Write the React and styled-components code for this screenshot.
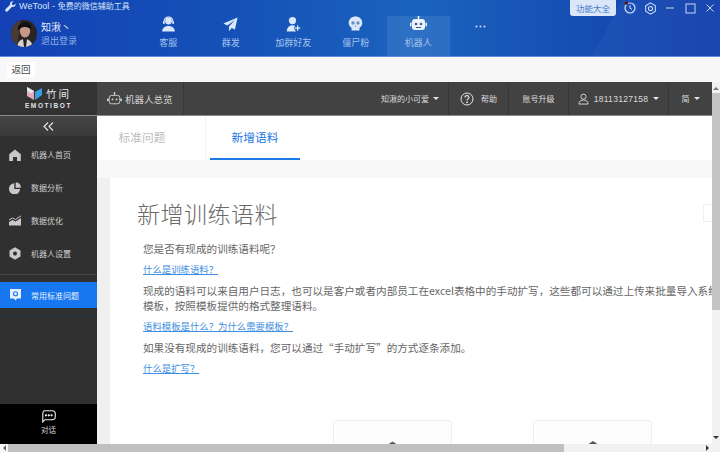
import React from 'react';
import styled, { createGlobalStyle } from 'styled-components';

const Global = createGlobalStyle`
  html, body { margin: 0; padding: 0; width: 720px; height: 452px; overflow: hidden; background: #fff; }
  * { box-sizing: border-box; }
  body { font-family: "Noto Sans CJK SC", "Liberation Sans", sans-serif; }
`;

const Window = styled.div`
  width: 720px; height: 452px; display: flex; flex-direction: column; overflow: hidden;
`;

/* ---------- blue app header ---------- */
const Header = styled.header`
  height: 57px; flex: none; display: flex; flex-direction: column;
  background:
    linear-gradient(118deg, transparent 0 83%, rgba(255,255,255,.03) 83% 100%),
    linear-gradient(90deg, #1341b4 0%, #1553b8 35%, #1b63bd 58%, #1650b4 78%, #1340ad 100%);
  border-bottom: 1px solid #5c8fe0;
`;
const TitleBar = styled.div`
  height: 16px; flex: none; display: flex; align-items: flex-start; padding-left: 5px; color: #d8e4f8;
`;
const WrenchSlot = styled.span`
  display: flex; margin-top: 1px;
`;
const AppTitle = styled.span`
  font-size: 8px; line-height: 12px; margin-left: 3px; white-space: nowrap;
`;
const AppTitleLatin = styled.span`
  font-family: "Liberation Sans", sans-serif; font-size: 9px; letter-spacing: .1px;
`;
const TitleTools = styled.div`
  margin-left: auto; display: flex; align-items: center; height: 16px;
`;
const FeatureButton = styled.div`
  width: 46px; height: 16px; margin-right: 4px; border-radius: 0 0 3px 3px; background: #dbe6f8;
  color: #3f7bd0; font-size: 8.5px; line-height: 16px; text-align: center;
`;
const ToolIcon = styled.span`
  width: 20px; height: 14px; display: flex; align-items: center; justify-content: center;
`;
const NavRow = styled.div`
  flex: 1; display: flex; min-height: 0;
`;
const UserBlock = styled.div`
  width: 137px; flex: none; display: flex; align-items: flex-start; padding: 4px 0 0 11px;
`;
const Avatar = styled.div`
  width: 26px; height: 27px; border-radius: 50%; overflow: hidden; flex: none; background: #2b2626;
`;
const UserText = styled.div`
  margin-left: 4px; display: flex; flex-direction: column;
`;
const UserName = styled.span`
  color: #e4ecfa; font-size: 10px; line-height: 13px;
`;
const Logout = styled.span`
  color: #8fb0e6; font-size: 9px; line-height: 13px; margin-top: 1px;
`;
const NavTab = styled.div`
  width: 62.5px; flex: none; display: flex; flex-direction: column; align-items: center;
  background: ${p => p.$active ? 'rgba(120,170,225,.2)' : 'transparent'};
`;
const NavIcon = styled.span`
  height: 16px; display: flex; align-items: center; justify-content: center;
  margin-top: ${p => p.$dots ? 2 : 0}px;
`;
const NavLabel = styled.span`
  color: #a9c4ee; font-size: 9px; line-height: 12px; margin-top: 5px; white-space: nowrap;
`;

/* ---------- back strip ---------- */
const BackStrip = styled.div`
  height: 25px; flex: none; background: #f7f7f7; display: flex; align-items: center; padding-left: 7px;
`;
const BackButton = styled.div`
  width: 28px; height: 15px; background: #fff; color: #444; font-size: 9.5px; line-height: 15px; text-align: center;
`;

/* ---------- embedded page ---------- */
const Stage = styled.div`
  flex: 1; min-height: 0; display: flex;
`;
const StageMain = styled.div`
  width: 712px; flex: none; display: flex; flex-direction: column; min-height: 0;
`;
const TopBar = styled.div`
  height: 34px; flex: none; display: flex; background: #424242; color: #ddd; border-bottom: 1px solid #8a8a8a;
`;
const LogoCell = styled.div`
  width: 97px; flex: none; background: #333; display: flex; flex-direction: column; align-items: center; padding-top: 5px;
`;
const LogoRow = styled.div`
  display: flex; align-items: center; height: 13px; margin-left: 1px;
`;
const LogoCN = styled.span`
  color: #e8e8e8; font-size: 10.5px; line-height: 13px; letter-spacing: 2px; margin-left: 4px;
`;
const LogoEN = styled.span`
  color: #e2e2e2; font-size: 6.5px; line-height: 8px; letter-spacing: 1.6px; margin-top: 2px; font-family: "Liberation Sans", sans-serif; font-weight: 700;
`;
const OverviewCell = styled.div`
  width: 87px; flex: none; display: flex; align-items: center; padding-left: 10px; gap: 3px; background: #454545; border-right: 1px solid #383838;
  font-size: 9.5px; color: #d4d4d4; white-space: nowrap;
`;
const BarSpacer = styled.div`flex: 1;`;
const BarCell = styled.div`
  width: ${p => p.$w}px; flex: none; display: flex; align-items: center; justify-content: center; gap: ${p => p.$gap || 4}px;
  border-left: ${p => p.$noBorder ? 'none' : '1px solid #383838'};
  font-size: 8px; color: #dcdcdc; white-space: nowrap;
`;
const Caret = styled.span`
  width: 0; height: 0; border-left: 3px solid transparent; border-right: 3px solid transparent; border-top: 3px solid #e4e4e4;
`;
const Phone = styled.span`
  font-family: "Liberation Sans", sans-serif; font-size: 8.5px; letter-spacing: .3px;
`;
const Body = styled.div`
  flex: 1; min-height: 0; display: flex;
`;

const Sidebar = styled.aside`
  width: 97px; flex: none; background: #303030; display: flex; flex-direction: column;
`;
const Collapse = styled.div`
  height: 20px; flex: none; background: linear-gradient(#454545, #3a3a3a); display: flex; align-items: center; justify-content: center;
`;
const MenuList = styled.div`
  padding-top: 2px; display: flex; flex-direction: column; border-bottom: 1px solid #48444a; height: 139px; flex: none;
`;
const MenuItem = styled.div`
  height: 33px; flex: none; display: flex; align-items: center; padding-left: 8px; color: #d0d0d0; font-size: 8px;
`;
const MenuIcon = styled.span`
  width: 14px; height: 14px; margin-right: 9px; display: flex; align-items: center; justify-content: center; flex: none;
`;
const ActiveItem = styled(MenuItem)`
  height: 26px; margin-top: 7px; background: #1677f0; color: #e6f0ff; border: 0;
`;
const SideFill = styled.div`
  flex: 1; border-top: 1px solid #20304c; margin-top: 8px;
`;
const ChatDock = styled.div`
  height: 40px; flex: none; background: #000; display: flex; flex-direction: column; align-items: center; padding-top: 6px; color: #ddd; font-size: 7.5px; line-height: 10px; gap: 2px;
`;

const Main = styled.main`
  flex: 1; min-width: 0; display: flex; flex-direction: column; overflow: hidden; background: #fff;
`;
const Tabs = styled.div`
  height: 44px; flex: none; display: flex; background: #fff;
`;
const Tab = styled.div`
  width: ${p => p.$w}px; flex: none; display: flex; align-items: center; justify-content: center;
  font-size: 11.7px; color: ${p => p.$active ? '#1b78e6' : '#bdbdbd'};
  margin-left: ${p => p.$active ? 4 : 0}px;
  padding: ${p => p.$active ? '0 0 2px' : '0 18px 4px 0'};
  border-right: ${p => p.$active ? 'none' : '1px solid #f2f2f2'};
  border-bottom: ${p => p.$active ? '2px solid #1b78e6' : 'none'};
`;
const Band = styled.div`
  height: 18px; flex: none; background: #f8f8f8;
`;
const ContentRow = styled.div`
  flex: 1; min-height: 0; display: flex;
`;
const Gutter = styled.div`
  width: 13px; flex: none; background: #f0f0f0;
`;
const Card = styled.section`
  flex: 1; min-width: 0; background: #fff; position: relative; overflow: hidden; padding: 22px 0 0 27px;
`;
const Title = styled.h1`
  margin: 0; font-size: 23px; line-height: 26px; font-weight: 300; color: #6a6a6a; letter-spacing: .5px; white-space: nowrap;
  font-family: "Noto Sans CJK SC", "Liberation Serif", serif;
`;
const Copy = styled.div`
  margin-left: 6px; padding-top: 15px; width: 600px;
`;
const Para = styled.p`
  margin: 0 0 6px; font-size: 10.6px; line-height: 15px; color: #666; white-space: nowrap;
`;
const QLink = styled.a`
  display: block; margin: 0 0 6px; font-size: 9.4px; line-height: 15px; color: #3f8fe0; text-decoration: underline; white-space: nowrap;
`;
const GhostBox = styled.div`
  position: absolute; right: 0; top: 26px; width: 9px; height: 18px; border: 1px solid #f0f0f0; border-right: none;
`;
const Choices = styled.div`
  position: absolute; left: 223px; top: 242px; display: flex; gap: 81px;
`;
const ChoiceCard = styled.div`
  width: 119px; height: 40px; border: 1px solid #eeeeee; border-radius: 3px; background: #fdfdfd; display: flex; justify-content: center; padding-top: 20px;
`;

/* ---------- scrollbars ---------- */
const VScroll = styled.div`
  width: 8px; flex: none; background: #f1f1f1; display: flex; flex-direction: column; align-items: center;
`;
const Arrow = styled.span`
  width: 0; height: 0; flex: none; border-left: 3px solid transparent; border-right: 3px solid transparent;
  ${p => p.$up ? 'border-bottom: 3px solid #777; margin-top: 5px;' : 'border-top: 3px solid #333; margin-bottom: 13px;'}
`;
const VThumb = styled.div`
  width: 8px; height: 217px; flex: none; background: #c4c4c4; margin-top: 3px; margin-bottom: auto;
`;
const HScroll = styled.div`
  height: 8px; flex: none; display: flex; align-items: center; background: #f1f1f1;
`;
const HCap = styled.div`
  width: 8px; height: 8px; flex: none; display: flex; align-items: center; justify-content: center; background: #f6f6f6;
`;
const HArrow = styled.span`
  width: 0; height: 0; border-top: 3px solid transparent; border-bottom: 3px solid transparent;
  ${p => p.$right ? 'border-left: 3px solid #333; margin-left: auto; margin-right: 3px;' : 'border-right: 3px solid #666;'}
`;
const HThumb = styled.div`
  width: 556px; height: 8px; flex: none; background: #c0c0c0;
`;

/* ---------- drawings ---------- */
const white = '#dbe7fa';
const Wrench = () => (
  <svg width="11" height="11" viewBox="0 0 12 12"><path d="M11.5 2.6 9.6 4.5 7.8 4 7.4 2.3 9.3.5C7.5-.1 5.5 1 5.4 3c0 .5 0 .9.2 1.2L.8 8.8c-.8.8-.7 1.8-.1 2.4.6.6 1.6.6 2.3-.1l4.6-4.7c2.3.6 4.6-1.3 3.9-3.8z" fill={white}/></svg>
);
const HistoryIco = () => (
  <svg width="14" height="14" viewBox="0 0 14 14"><circle cx="7" cy="7" r="5" fill="none" stroke="#cfe0f8" strokeWidth="1.2"/><path d="M7 4.2v3l2 1.2" fill="none" stroke="#cfe0f8"/><circle cx="3.4" cy="2.2" r="1.6" fill="#5a1010"/></svg>
);
const Gear = () => (
  <svg width="13" height="13" viewBox="0 0 14 14" fill="none" stroke="#cfe0f8" strokeWidth="1.1"><path d="M7 1l5.2 3v6L7 13 1.8 10V4z"/><circle cx="7" cy="7" r="2.2"/></svg>
);
const Minimize = () => <svg width="10" height="10" viewBox="0 0 10 10"><path d="M1 5h8" stroke="#c8d8f4" strokeWidth="1"/></svg>;
const Maximize = () => <svg width="11" height="11" viewBox="0 0 11 11"><rect x="1" y="1" width="9" height="9" fill="none" stroke="#c8d8f4"/></svg>;
const CloseX = () => <svg width="10" height="10" viewBox="0 0 10 10"><path d="M1.5 1.5l7 7M8.5 1.5l-7 7" stroke="#c8d8f4" strokeWidth="1"/></svg>;

const AvatarArt = () => (
  <svg width="26" height="27" viewBox="0 0 26 27">
    <rect width="26" height="27" fill="#2a2525"/>
    <path d="M0 0h10L6 27H0z" fill="#4a3b35"/>
    <ellipse cx="14" cy="11" rx="5.2" ry="6.5" fill="#c49a84"/>
    <path d="M7 11c-1-7 4-9 8-9s6 4 5 8c-2-3-5-3-7-3s-4 1-6 4z" fill="#111"/>
    <path d="M6 27c1-6 4-8 8-8s7 3 8 8z" fill="#d8d3cf"/>
    <path d="M12 19h4l-1 8h-2z" fill="#222"/>
  </svg>
);
const Agent = () => (
  <svg width="15" height="16" viewBox="0 0 15 16" fill={white}><circle cx="7.5" cy="5" r="3.4"/><path d="M2.6 5.5C2.6 2.4 4.8.6 7.5.6s4.9 1.8 4.9 4.9h-1C11.4 3 9.6 1.6 7.5 1.6S3.6 3 3.6 5.5z"/><rect x="2" y="5" width="1.8" height="3" rx=".7"/><rect x="11.2" y="5" width="1.8" height="3" rx=".7"/><path d="M1.2 15.4c0-3.2 2.6-5.4 6.3-5.4s6.3 2.2 6.3 5.4z"/></svg>
);
const Plane = () => (
  <svg width="15" height="15" viewBox="0 0 15 15" fill={white}><path d="M14.6.4.4 6.6l3.9 1.9L12 3 6 9.4v4.8l2.6-3.3 3.3 1.5z"/></svg>
);
const AddFriend = () => (
  <svg width="15" height="16" viewBox="0 0 15 16" fill={white}><circle cx="6.5" cy="4.6" r="3.6"/><path d="M.8 15.4c0-3.8 2.4-6.2 5.7-6.2 1 0 1.9.2 2.6.6-.5.6-.8 1.4-.8 2.2 0 1.3.8 2.5 2 3.4z"/><path d="M11 9.4h1.3v2h2v1.3h-2v2H11v-2H9v-1.3h2z"/></svg>
);
const Skull = () => (
  <svg width="15" height="16" viewBox="0 0 15 16"><path d="M7.5.6c3.9 0 6.8 2.6 6.8 6.2 0 2.3-1 4-2.8 5v2.6h-8v-2.6C1.7 10.8.7 9.1.7 6.8.7 3.2 3.6.6 7.5.6z" fill={white}/><circle cx="5" cy="7" r="1.7" fill="#6c8fc8"/><circle cx="10" cy="7" r="1.7" fill="#6c8fc8"/><path d="M7.5 9l1 1.8h-2z" fill="#6c8fc8"/></svg>
);
const Robot = () => (
  <svg width="17" height="16" viewBox="0 0 17 16"><rect x="7.9" y="0" width="1.2" height="3" fill="#fff"/><circle cx="8.5" cy="1" r="1" fill="#fff"/><rect x="2" y="3" width="13" height="11" rx="3" fill="#eef4fd"/><rect x="0" y="6.5" width="1.5" height="4" rx=".7" fill="#eef4fd"/><rect x="15.5" y="6.5" width="1.5" height="4" rx=".7" fill="#eef4fd"/><circle cx="6" cy="8" r="1.3" fill="#3a5c98"/><circle cx="11" cy="8" r="1.3" fill="#3a5c98"/><rect x="6" y="11" width="5" height="1" fill="#3a5c98"/></svg>
);
const Dots = () => (
  <svg width="11" height="3" viewBox="0 0 11 3" fill="#cfe0f8"><circle cx="1.5" cy="1.5" r="1"/><circle cx="5.5" cy="1.5" r="1"/><circle cx="9.5" cy="1.5" r="1"/></svg>
);
const LogoMark = () => (
  <svg width="15" height="13" viewBox="0 0 15 13"><path d="M0 0l7 4v9L0 9z" fill="#e8a8b8"/><path d="M0 0l7 4-3 2.5L0 4z" fill="#dfe8ee"/><path d="M15 1v7l-7 5V5z" fill="#3a9fe0"/></svg>
);
const BotOutline = () => (
  <svg width="15" height="13" viewBox="0 0 17 14" fill="#d8d8d8"><rect x="8" y="0" width="1" height="3"/><circle cx="8.5" cy="1" r="1"/><path d="M5 3.500h7a2.500 2.500 0 0 1 2.500 2.500v4.500A2.500 2.500 0 0 1 12 13H5a2.500 2.500 0 0 1-2.500-2.500V6A2.500 2.500 0 0 1 5 3.500z" fill="none" stroke="#d8d8d8"/><rect x="0" y="7" width="2" height="3" rx="1"/><rect x="15" y="7" width="2" height="3" rx="1"/><circle cx="6.2" cy="8" r="1"/><circle cx="10.8" cy="8" r="1"/></svg>
);
const Help = () => (
  <svg width="14" height="14" viewBox="0 0 14 14" fill="none" stroke="#e6e6e6"><circle cx="7" cy="7" r="6"/><path d="M5 5.500C5 4.200 6 3.600 7 3.600s2 .7 2 1.800c0 1.500-2 1.500-2 3.200" strokeWidth="1.1"/><circle cx="7" cy="10.300" r=".5" fill="#e6e6e6"/></svg>
);
const UserIco = () => (
  <svg width="11" height="12" viewBox="0 0 12 12" fill="none" stroke="#dcdcdc"><circle cx="6" cy="3.500" r="2.800"/><path d="M1 11.500c0-3 2.200-4.300 5-4.300s5 1.300 5 4.300z"/></svg>
);
const Chevrons = () => (
  <svg width="11" height="9" viewBox="0 0 11 9" fill="none" stroke="#e8e8e8" strokeWidth="1.1"><path d="M5 .5l-4 4 4 4M10 .5l-4 4 4 4"/></svg>
);
const HomeIco = () => (
  <svg width="12" height="12" viewBox="0 0 12 12" fill="#c8c8c8"><path d="M6 .5l5.800 4.800V12H8V8H4v4H.2V5.300z"/></svg>
);
const PieIco = () => (
  <svg width="12" height="12" viewBox="0 0 12 12" fill="#c8c8c8"><path d="M5.300 1.200v5.900h5.800A5.600 5.600 0 1 1 5.300 1.200z"/><path d="M6.700.2A5.300 5.300 0 0 1 11.900 5.700H6.700z"/></svg>
);
const TrendIco = () => (
  <svg width="12" height="11" viewBox="0 0 12 11" fill="#c8c8c8"><path d="M0 10.500V7l3.500-2 3 1.500L12 3v7.500z"/><path d="M0 5l3.500-2 3 1.500L12 .8" fill="none" stroke="#c8c8c8"/></svg>
);
const HexIco = () => (
  <svg width="12" height="13" viewBox="0 0 12 13"><path d="M6 .3l5.500 3.100v6.200L6 12.700.5 9.600V3.400z" fill="#c8c8c8"/><circle cx="6" cy="6.500" r="2" fill="#303030"/></svg>
);
const QIco = () => (
  <svg width="11" height="12" viewBox="0 0 11 12"><path d="M0 0h11v9.500H7L5.500 11.500 4 9.500H0z" fill="#e8f1ff"/><circle cx="5.500" cy="4.700" r="2" fill="none" stroke="#1677f0" strokeWidth="1.1"/></svg>
);
const ChatIco = () => (
  <svg width="15" height="13" viewBox="0 0 15 13" fill="none" stroke="#eee" strokeWidth="1.1"><path d="M4 .8h7c1.800 0 3.300 1.400 3.300 3.200v2.500c0 1.800-1.500 3.200-3.300 3.200H3.800L1.800 12V4C1.800 2.200 2.300.8 4 .8z"/><circle cx="5" cy="5.300" r=".6" fill="#eee"/><circle cx="7.800" cy="5.300" r=".6" fill="#eee"/><circle cx="10.600" cy="5.300" r=".6" fill="#eee"/></svg>
);
const PeekIcon = ({ w }) => (
  <svg width={w} height="4" viewBox="0 0 12 4"><path d="M6 0l6 4H0z" fill="#555"/></svg>
);

const navs = [
  ['客服', <Agent />], ['群发', <Plane />], ['加群好友', <AddFriend />], ['僵尸粉', <Skull />], ['机器人', <Robot />, true], ['', <Dots />],
];
const menu = [
  ['机器人首页', <HomeIco />], ['数据分析', <PieIco />], ['数据优化', <TrendIco />], ['机器人设置', <HexIco />],
];

export default function App() {
  return (
    <Window>
      <Global />
      <Header>
        <TitleBar>
          <WrenchSlot><Wrench /></WrenchSlot>
          <AppTitle><AppTitleLatin>WeTool - </AppTitleLatin>免费的微信辅助工具</AppTitle>
          <TitleTools>
            <FeatureButton>功能大全</FeatureButton>
            <ToolIcon><HistoryIco /></ToolIcon>
            <ToolIcon><Gear /></ToolIcon>
            <ToolIcon><Minimize /></ToolIcon>
            <ToolIcon><Maximize /></ToolIcon>
            <ToolIcon><CloseX /></ToolIcon>
          </TitleTools>
        </TitleBar>
        <NavRow>
          <UserBlock>
            <Avatar><AvatarArt /></Avatar>
            <UserText>
              <UserName>知湫丶</UserName>
              <Logout>退出登录</Logout>
            </UserText>
          </UserBlock>
          {navs.map(([label, icon, active], i) => (
            <NavTab key={i} $active={active}>
              <NavIcon $dots={!label}>{icon}</NavIcon>
              {label && <NavLabel>{label}</NavLabel>}
            </NavTab>
          ))}
        </NavRow>
      </Header>
      <BackStrip><BackButton>返回</BackButton></BackStrip>
      <Stage>
        <StageMain>
          <TopBar>
            <LogoCell>
              <LogoRow><LogoMark /><LogoCN>竹间</LogoCN></LogoRow>
              <LogoEN>EMOTIBOT</LogoEN>
            </LogoCell>
            <OverviewCell><BotOutline />机器人总览</OverviewCell>
            <BarSpacer />
            <BarCell $w={76} $noBorder>知湫的小可爱<Caret /></BarCell>
            <BarCell $w={60} $gap={7}><Help />帮助</BarCell>
            <BarCell $w={60}>账号升级</BarCell>
            <BarCell $w={100} $gap={5}><UserIco /><Phone>18113127158</Phone><Caret /></BarCell>
            <BarCell $w={44}>简<Caret /></BarCell>
          </TopBar>
          <Body>
            <Sidebar>
              <Collapse><Chevrons /></Collapse>
              <MenuList>
                {menu.map(([label, icon]) => (
                  <MenuItem key={label}><MenuIcon>{icon}</MenuIcon>{label}</MenuItem>
                ))}
              </MenuList>
              <ActiveItem><MenuIcon><QIco /></MenuIcon>常用标准问题</ActiveItem>
              <SideFill />
              <ChatDock><ChatIco />对话</ChatDock>
            </Sidebar>
            <Main>
              <Tabs>
                <Tab $w={109}>标准问题</Tab>
                <Tab $w={90} $active>新增语料</Tab>
              </Tabs>
              <Band />
              <ContentRow>
                <Gutter />
                <Card>
                  <Title>新增训练语料</Title>
                  <Copy>
                    <Para>您是否有现成的训练语料呢？</Para>
                    <QLink>什么是训练语料？</QLink>
                    <Para>现成的语料可以来自用户日志，也可以是客户或者内部员工在excel表格中的手动扩写，这些都可以通过上传来批量导入系统<br />模板，按照模板提供的格式整理语料。</Para>
                    <QLink>语料模板是什么？为什么需要模板？</QLink>
                    <Para>如果没有现成的训练语料，您可以通过“手动扩写”的方式逐条添加。</Para>
                    <QLink>什么是扩写？</QLink>
                  </Copy>
                  <GhostBox />
                  <Choices>
                    <ChoiceCard><PeekIcon w={9} /></ChoiceCard>
                    <ChoiceCard><PeekIcon w={14} /></ChoiceCard>
                  </Choices>
                </Card>
              </ContentRow>
            </Main>
          </Body>
          <HScroll>
            <HCap><HArrow /></HCap>
            <HThumb />
            <HArrow $right />
          </HScroll>
        </StageMain>
        <VScroll>
          <Arrow $up />
          <VThumb />
          <Arrow />
        </VScroll>
      </Stage>
    </Window>
  );
}
